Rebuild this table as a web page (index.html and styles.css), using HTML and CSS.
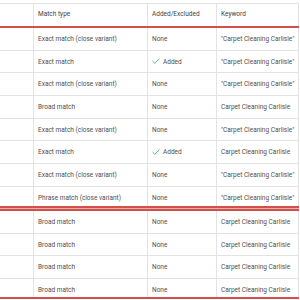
FILE: index.html
```html
<!DOCTYPE html>
<html lang="en">
<head>
  <meta charset="UTF-8" />
  <title>Search terms</title>
  <link rel="stylesheet" href="styles.css">
</head>
<body>
  <div class="terms">
    <div class="row head">
      <div class="cell"></div>
      <div class="cell">Match type</div>
      <div class="cell">Added/Excluded</div>
      <div class="cell">Keyword</div>
    </div>

    <div class="row">
      <div class="cell"></div>
      <div class="cell">Exact match (close variant)</div>
      <div class="cell">None</div>
      <div class="cell">"Carpet Cleaning Carlisle"</div>
    </div>
    <div class="row">
      <div class="cell"></div>
      <div class="cell">Exact match</div>
      <div class="cell"><svg class="check" viewBox="0 0 8 6"><path d="M0.5 3.2 L2.8 5.3 L7.5 0.7" /></svg>Added</div>
      <div class="cell">"Carpet Cleaning Carlisle"</div>
    </div>
    <div class="row">
      <div class="cell"></div>
      <div class="cell">Exact match (close variant)</div>
      <div class="cell">None</div>
      <div class="cell">"Carpet Cleaning Carlisle"</div>
    </div>
    <div class="row">
      <div class="cell"></div>
      <div class="cell">Broad match</div>
      <div class="cell">None</div>
      <div class="cell">Carpet Cleaning Carlisle</div>
    </div>
    <div class="row">
      <div class="cell"></div>
      <div class="cell">Exact match (close variant)</div>
      <div class="cell">None</div>
      <div class="cell">"Carpet Cleaning Carlisle"</div>
    </div>
    <div class="row">
      <div class="cell"></div>
      <div class="cell">Exact match</div>
      <div class="cell"><svg class="check" viewBox="0 0 8 6"><path d="M0.5 3.2 L2.8 5.3 L7.5 0.7" /></svg>Added</div>
      <div class="cell">Carpet Cleaning Carlisle</div>
    </div>
    <div class="row">
      <div class="cell"></div>
      <div class="cell">Exact match (close variant)</div>
      <div class="cell">None</div>
      <div class="cell">"Carpet Cleaning Carlisle"</div>
    </div>
    <div class="row group-end">
      <div class="cell"></div>
      <div class="cell">Phrase match (close variant)</div>
      <div class="cell">None</div>
      <div class="cell">"Carpet Cleaning Carlisle"</div>
    </div>

    <div class="row">
      <div class="cell"></div>
      <div class="cell">Broad match</div>
      <div class="cell">None</div>
      <div class="cell">Carpet Cleaning Carlisle</div>
    </div>
    <div class="row">
      <div class="cell"></div>
      <div class="cell">Broad match</div>
      <div class="cell">None</div>
      <div class="cell">Carpet Cleaning Carlisle</div>
    </div>
    <div class="row">
      <div class="cell"></div>
      <div class="cell">Broad match</div>
      <div class="cell">None</div>
      <div class="cell">Carpet Cleaning Carlisle</div>
    </div>
    <div class="row last">
      <div class="cell"></div>
      <div class="cell">Broad match</div>
      <div class="cell">None</div>
      <div class="cell">Carpet Cleaning Carlisle</div>
    </div>
  </div>
</body>
</html>
```

FILE: styles.css
```css
* {
  margin: 0;
  padding: 0;
  box-sizing: border-box;
}

body {
  background: #fff;
  font-family: Roboto, 'Liberation Sans', sans-serif;
  font-size: 6.5px;
  line-height: 8px;
  color: #4f4f4f;
  overflow: hidden;
}

/* Table */
.terms {
  width: 299px;
  margin-top: 3px;
  border-top: 1px solid #e3e3e3;
}

.row {
  display: grid;
  grid-template-columns: 34px 114px 69px 82px;
  height: 22.67px;
  border-bottom: 1px solid #e3e3e3;
}

.cell {
  border-right: 1px solid #e3e3e3;
  padding: 7px 0 0 4px;
  white-space: nowrap;
  overflow: hidden;
}

.head {
  height: 24px;
  border-bottom: 2px solid #d2504a;
}

.head .cell {
  padding-top: 6px;
  color: #444;
}

/* Red outline around the row groups */
.group-end {
  height: 21.3px;
  margin-bottom: 3px;
  border-bottom: 2px solid #d2504a;
  box-shadow: 0 1px 0 #eab0ad, 0 3px 0 #d2504a;
}

.last {
  height: 20px;
  border-bottom: 2px solid #d2504a;
}

.check {
  width: 8px;
  height: 6px;
  margin-right: 3px;
  vertical-align: -0.5px;
  fill: none;
  stroke: #5cb87a;
  stroke-width: 1;
}
```
